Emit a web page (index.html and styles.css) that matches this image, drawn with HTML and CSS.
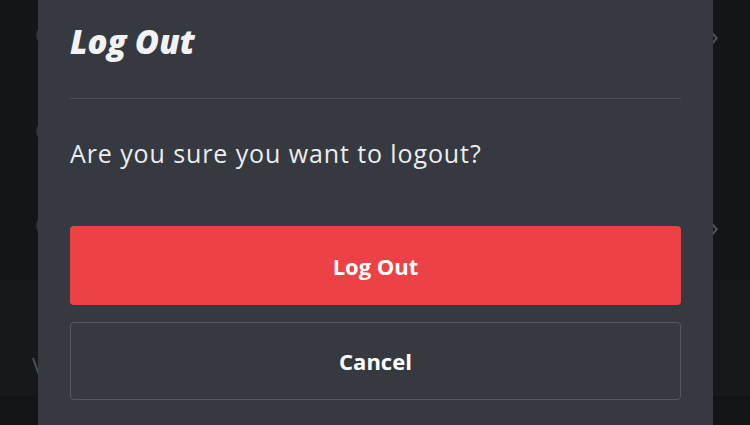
FILE: index.html
```html
<!DOCTYPE html>
<html lang="en">
<head>
    <meta charset="UTF-8">
    <meta name="viewport" content="width=device-width, initial-scale=1.0">
    <title>Log Out</title>
    <link rel="stylesheet" href="styles.css">
</head>
<body>
    <div class="settings">
        <div class="row"><span class="row-icon"></span><span class="chevron">&#x203A;</span></div>
        <div class="row"><span class="row-icon"></span><span class="chevron chevron-hidden">&#x203A;</span></div>
        <div class="row row-last"><span class="row-icon"></span><span class="chevron">&#x203A;</span></div>
        <div class="row row-alt"><span class="row-label">Voice</span></div>
        <div class="row row-bottom"></div>
    </div>

    <div class="modal">
        <div class="modal-header">
            <h1>Log Out</h1>
        </div>
        <p class="modal-text">Are you sure you want to logout?</p>
        <button class="btn btn-danger">Log Out</button>
        <button class="btn btn-outline">Cancel</button>
    </div>
</body>
</html>
```

FILE: styles.css
```css
* {
    margin: 0;
    padding: 0;
    box-sizing: border-box;
}

body {
    width: 750px;
    height: 425px;
    overflow: hidden;
    background: #141517;
    font-family: 'Open Sans', 'Noto Sans', sans-serif;
    color: #f2f3f5;
    position: relative;
}

/* background settings list, mostly hidden by the modal */
.settings {
    display: flex;
    flex-direction: column;
    margin-top: -13px;
}

.row {
    height: 96px;
    display: flex;
    align-items: center;
    justify-content: space-between;
    padding: 0 31px 0 36px;
    color: #4e5158;
    font-size: 20px;
}

.row-last {
    height: 101px;
    align-items: flex-start;
    padding-top: 36px;
}

.row-icon {
    width: 22px;
    height: 22px;
    border-radius: 50%;
    background: #2e3035;
}

.row-alt {
    height: 116px;
    align-items: flex-start;
    padding-top: 73px;
    padding-left: 32px;
    background: #17181b;
}

.row-label {
    font-size: 22px;
    line-height: 24px;
}

.row-bottom {
    height: 40px;
    background: #131416;
}

.chevron {
    font-size: 30px;
    line-height: 22px;
    color: #4e5158;
}

.chevron-hidden {
    visibility: hidden;
}

.modal {
    position: absolute;
    top: -10px;
    left: 38px;
    width: 675px;
    height: 445px;
    background: #36393f;
    padding: 10px 32px 0;
    display: flex;
    flex-direction: column;
}

.modal-header {
    height: 99px;
    border-bottom: 1px solid #4b4e54;
    padding-top: 22px;
}

.modal-header h1 {
    font-size: 33px;
    line-height: 40px;
    font-weight: 800;
    font-style: italic;
    color: #f2f3f5;
}

.modal-text {
    margin-top: 38px;
    font-size: 25px;
    line-height: 32px;
    letter-spacing: 0.9px;
    color: #ebedef;
}

.btn {
    width: 100%;
    height: 79px;
    border-radius: 4px;
    font-family: inherit;
    font-size: 22px;
    font-weight: 700;
    color: #ffffff;
    cursor: pointer;
}

.btn-danger {
    margin-top: 57px;
    background: #ed4245;
    border: none;
}

.btn-outline {
    margin-top: 17px;
    height: 78px;
    background: transparent;
    border: 1px solid #55585f;
}
```
